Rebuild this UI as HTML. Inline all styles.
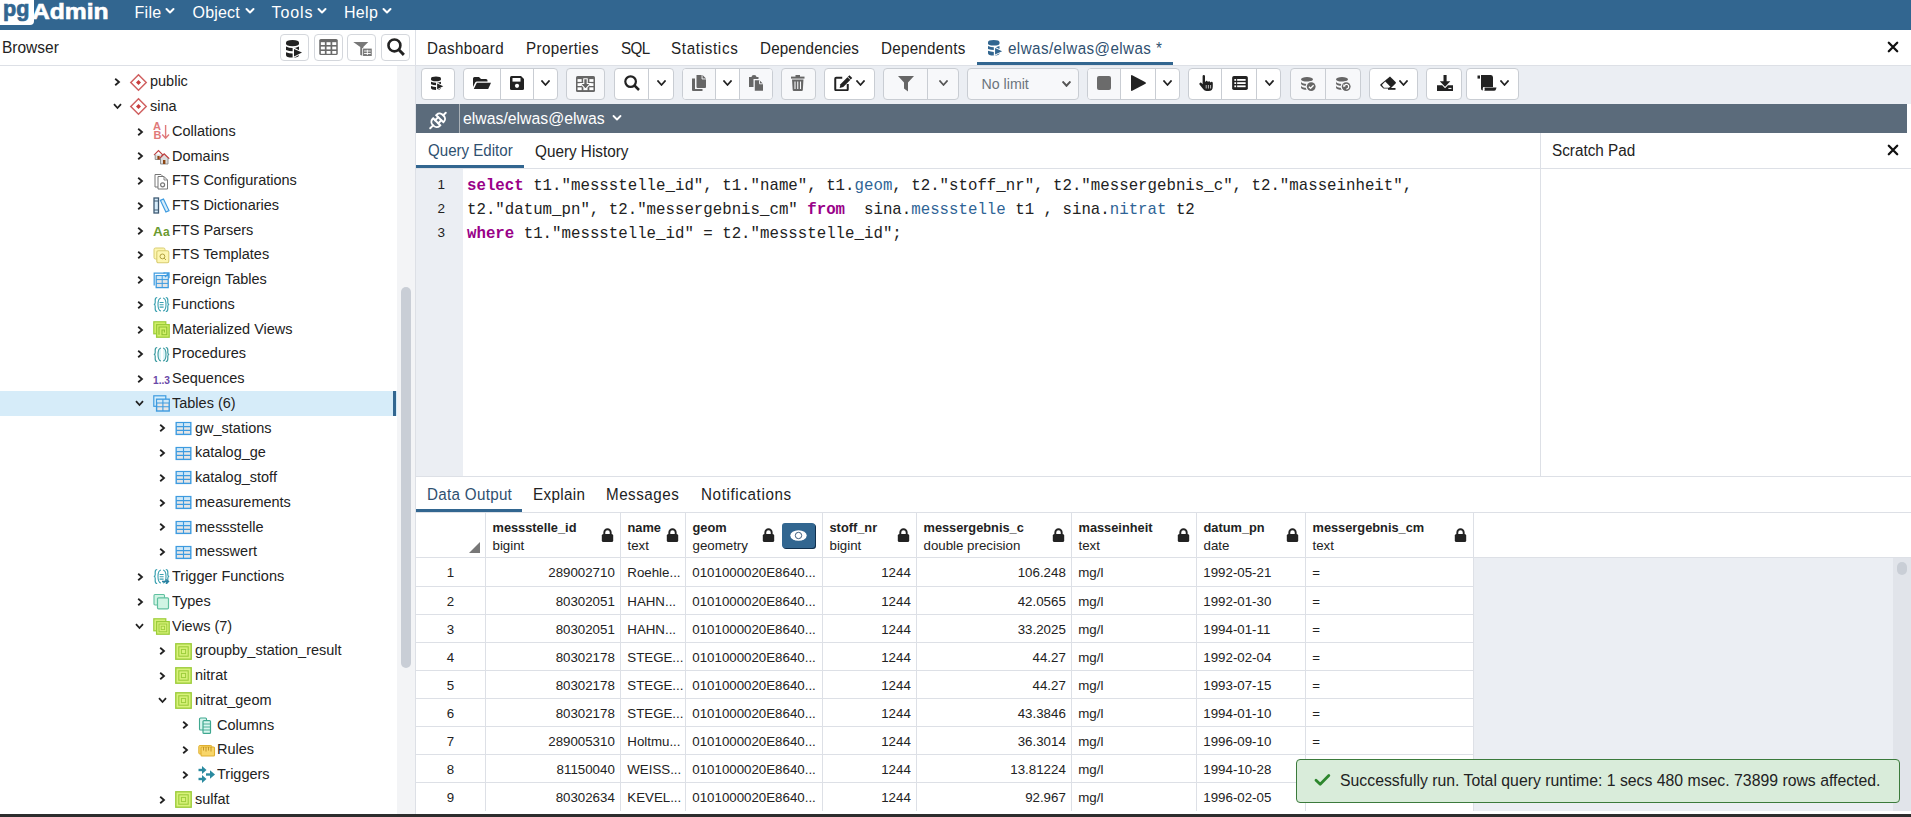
<!DOCTYPE html><html><head><meta charset="utf-8"><style>
*{box-sizing:border-box;margin:0;padding:0}
html,body{width:1911px;height:817px;overflow:hidden;background:#fff}
body{position:relative;font-family:"Liberation Sans",sans-serif;color:#222;font-size:14px}
.a{position:absolute}
.t{position:absolute;white-space:nowrap;line-height:1}
svg{display:block}
#nav{left:0;top:0;width:1911px;height:30px;background:#326690}
.menu{color:#fff;font-size:16px}
.btn{position:absolute;top:68px;height:32px;border:1px solid #c9cdd3;border-radius:4px;background:#fff}
.dis{background:#f7f8fa}
.div{position:absolute;top:0;bottom:0;width:1px;background:#c9cdd3}
.row{position:absolute;left:0;width:397px;height:24.76px}
.tx{position:absolute;top:4px;line-height:16px;white-space:nowrap;color:#222}
.chev{position:absolute;top:7px}
.ic{position:absolute;top:4px}
.gl{position:absolute;background:#dde0e6}
.cell{position:absolute;font-size:13.3px;line-height:16px;white-space:nowrap;color:#222}
</style></head><body>
<div id="nav" class="a"></div>
<div class="a" style="left:0;top:0;width:34px;height:25px;background:#fff;border-radius:0 0 4px 0"></div>
<div class="t" style="left:2.8px;top:-2.5px;font-size:22px;font-weight:bold;color:#326690;-webkit-text-stroke:0.7px #326690;transform:scaleX(0.98);transform-origin:0 0">pg</div>
<div class="t" style="left:31.5px;top:0.5px;font-size:22px;font-weight:bold;color:#fff;-webkit-text-stroke:0.6px #fff;transform:scaleX(1.12);transform-origin:0 0">Admin</div>
<div class="t menu" style="left:134.5px;top:5px;letter-spacing:0.3px">File</div>
<svg class="a" style="left:165px;top:6px" width="10" height="10" viewBox="0 0 10 10"><path d="M1.5 3 L5 6.5 L8.5 3" fill="none" stroke="#fff" stroke-width="2" stroke-linecap="round" stroke-linejoin="round"/></svg>
<div class="t menu" style="left:192.5px;top:5px;letter-spacing:0.2px">Object</div>
<svg class="a" style="left:245px;top:6px" width="10" height="10" viewBox="0 0 10 10"><path d="M1.5 3 L5 6.5 L8.5 3" fill="none" stroke="#fff" stroke-width="2" stroke-linecap="round" stroke-linejoin="round"/></svg>
<div class="t menu" style="left:271.5px;top:5px;letter-spacing:0.9px">Tools</div>
<svg class="a" style="left:317px;top:6px" width="10" height="10" viewBox="0 0 10 10"><path d="M1.5 3 L5 6.5 L8.5 3" fill="none" stroke="#fff" stroke-width="2" stroke-linecap="round" stroke-linejoin="round"/></svg>
<div class="t menu" style="left:344px;top:5px;letter-spacing:0.3px">Help</div>
<svg class="a" style="left:382px;top:6px" width="10" height="10" viewBox="0 0 10 10"><path d="M1.5 3 L5 6.5 L8.5 3" fill="none" stroke="#fff" stroke-width="2" stroke-linecap="round" stroke-linejoin="round"/></svg>
<div class="t" style="left:2px;top:39px;font-size:16.43px;transform:scaleX(0.9434);transform-origin:0 0;color:#222">Browser</div>
<div class="a" style="left:0;top:65px;width:415px;height:1px;background:#dde0e6"></div>
<div class="a" style="left:415px;top:30px;width:1px;height:35px;background:#dde0e6"></div>
<div class="a" style="left:280px;top:34px;width:29px;height:27px;border:1px solid #d4d7dc;border-radius:4px;background:#fff"></div>
<div class="a" style="left:314px;top:34px;width:29px;height:27px;border:1px solid #d4d7dc;border-radius:4px;background:#fff"></div>
<div class="a" style="left:347px;top:34px;width:29px;height:27px;border:1px solid #d4d7dc;border-radius:4px;background:#fff"></div>
<div class="a" style="left:381px;top:34px;width:29px;height:27px;border:1px solid #d4d7dc;border-radius:4px;background:#fff"></div>
<svg class="a" style="left:286px;top:40px" width="17" height="18" viewBox="0 0 17 18"><g fill="#222">
<path d="M0 2.6 Q0 0 6.5 0 Q13 0 13 2.6 V3.8 Q13 6.2 6.5 6.2 Q0 6.2 0 3.8Z"/>
<path d="M0 6.6 Q6.5 9.6 13 6.6 V10 Q6.5 12.6 0 10Z"/>
<path d="M0 12.2 Q6.5 14.8 13 12.2 V15 Q13 17.6 6.5 17.6 Q0 17.6 0 15Z"/>
</g>
<path d="M6.6 6.8 L17.6 12.6 L6.6 18.4Z" fill="#fff"/>
<path d="M8 9 L16 12.6 L8 16.4Z" fill="#222"/></svg>
<svg class="a" style="left:319px;top:39px" width="19" height="16" viewBox="0 0 18.5 16"><rect x="0" y="0" width="18.5" height="16" rx="1.6" fill="#6a6a6a"/><rect x="1.6" y="3.2" width="4" height="2.8" fill="#fff"/><rect x="7.3" y="3.2" width="4" height="2.8" fill="#fff"/><rect x="13" y="3.2" width="4" height="2.8" fill="#fff"/><rect x="1.6" y="7.6" width="4" height="2.8" fill="#fff"/><rect x="7.3" y="7.6" width="4" height="2.8" fill="#fff"/><rect x="13" y="7.6" width="4" height="2.8" fill="#fff"/><rect x="1.6" y="12" width="4" height="2.8" fill="#fff"/><rect x="7.3" y="12" width="4" height="2.8" fill="#fff"/><rect x="13" y="12" width="4" height="2.8" fill="#fff"/></svg>
<svg class="a" style="left:353px;top:42px" width="19" height="14" viewBox="0 0 18.5 14"><path d="M0 0 H15 L10 5 V14 L7 13 V5Z" fill="#777"/><rect x="9" y="6" width="9.5" height="8" fill="#fff"/><rect x="9.8" y="6.6" width="8.7" height="7.4" fill="#777"/><path d="M10.8 9 H17.5 M10.8 11.5 H17.5 M14.1 7.8 V13" stroke="#fff" stroke-width="0.9"/></svg>
<svg class="a" style="left:387px;top:38px" width="18" height="18" viewBox="0 0 16 16"><circle cx="6.6" cy="6.6" r="5.3" fill="none" stroke="#222" stroke-width="2.3"/><path d="M10.5 10.5 L15 15" stroke="#222" stroke-width="2.5999999999999996" stroke-linecap="butt"/></svg>
<div class="a" style="left:397px;top:66px;width:18px;height:748px;background:#f3f4f6"></div>
<div class="a" style="left:401px;top:287px;width:10px;height:381px;background:#c9ced6;border-radius:5px"></div>
<svg class="a" style="left:114.0px;top:78.10px" width="7" height="8" viewBox="0 0 7 8"><path d="M1.2 0.7 L5 4 L1.2 7.3" fill="none" stroke="#222" stroke-width="1.8"/></svg>
<svg class="a" style="left:130.0px;top:73.6px;overflow:visible" width="17" height="17" viewBox="0 0 17 17"><path d="M8.5 0.8 L16.2 8.5 L8.5 16.2 L0.8 8.5 Z" fill="#fff" stroke="#d06060" stroke-width="1.5"/><path d="M8.5 6 L11 8.5 L8.5 11 L6 8.5Z" fill="#c83c3c"/></svg>
<div class="tx" style="left:149.8px;top:73.30px;font-size:15.37px;transform:scaleX(0.9434);transform-origin:0 0">public</div>
<svg class="a" style="left:112.5px;top:103.34px" width="9" height="7" viewBox="0 0 9 7"><path d="M1 1.2 L4.5 5 L8 1.2" fill="none" stroke="#222" stroke-width="1.8"/></svg>
<svg class="a" style="left:130.0px;top:98.34px;overflow:visible" width="17" height="17" viewBox="0 0 17 17"><path d="M8.5 0.8 L16.2 8.5 L8.5 16.2 L0.8 8.5 Z" fill="#fff" stroke="#d06060" stroke-width="1.5"/><path d="M8.5 6 L11 8.5 L8.5 11 L6 8.5Z" fill="#c83c3c"/></svg>
<div class="tx" style="left:149.8px;top:98.04px;font-size:15.37px;transform:scaleX(0.9434);transform-origin:0 0">sina</div>
<svg class="a" style="left:136.5px;top:127.58px" width="7" height="8" viewBox="0 0 7 8"><path d="M1.2 0.7 L5 4 L1.2 7.3" fill="none" stroke="#222" stroke-width="1.8"/></svg>
<svg class="a" style="left:152.5px;top:123.08px;overflow:visible" width="17" height="17" viewBox="0 0 17 17"><text x="0" y="7" font-size="11" fill="#e07a7a" font-family="Liberation Sans" font-weight="bold">A</text><text x="0.5" y="16" font-size="11" fill="#e07a7a" font-family="Liberation Sans" font-weight="bold">B</text><path d="M12.6 2 V15.2 M9.2 11.6 L12.6 15.2 L16 11.6" fill="none" stroke="#e07a7a" stroke-width="1.4"/></svg>
<div class="tx" style="left:172.3px;top:122.78px;font-size:15.37px;transform:scaleX(0.9434);transform-origin:0 0">Collations</div>
<svg class="a" style="left:136.5px;top:152.32px" width="7" height="8" viewBox="0 0 7 8"><path d="M1.2 0.7 L5 4 L1.2 7.3" fill="none" stroke="#222" stroke-width="1.8"/></svg>
<svg class="a" style="left:152.5px;top:147.82px;overflow:visible" width="17" height="17" viewBox="0 0 17 17"><path d="M1 7.2 L5.5 2.5 L10 7.2" fill="none" stroke="#c04040" stroke-width="1.2"/><path d="M2.2 6.5 V11.5 H8.8 V6.5" fill="#ddd" stroke="#888" stroke-width="0.9"/><rect x="4.4" y="8" width="2.2" height="3.5" fill="#8b4513"/><path d="M6.2 10.8 L11.2 5.8 L16.2 10.8" fill="#ddd" stroke="#c04040" stroke-width="1.3"/><path d="M7.5 10 V16 H15 V10" fill="#ddd" stroke="#888" stroke-width="0.9"/><rect x="10" y="12" width="2.4" height="4" fill="#8b4513"/></svg>
<div class="tx" style="left:172.3px;top:147.52px;font-size:15.37px;transform:scaleX(0.9434);transform-origin:0 0">Domains</div>
<svg class="a" style="left:136.5px;top:177.06px" width="7" height="8" viewBox="0 0 7 8"><path d="M1.2 0.7 L5 4 L1.2 7.3" fill="none" stroke="#222" stroke-width="1.8"/></svg>
<svg class="a" style="left:152.5px;top:172.56px;overflow:visible" width="17" height="17" viewBox="0 0 17 17"><path d="M2 1.5 H8 L11 4.5 V14 H2Z" fill="#fff" stroke="#777" stroke-width="1"/><path d="M5 3.5 H11 L14.5 7 V16 H5Z" fill="#fff" stroke="#777" stroke-width="1"/><path d="M11 3.5 V7 H14.5" fill="none" stroke="#777" stroke-width="0.9"/><circle cx="9.6" cy="11.8" r="2" fill="none" stroke="#777" stroke-width="1.2"/></svg>
<div class="tx" style="left:172.3px;top:172.26px;font-size:15.37px;transform:scaleX(0.9434);transform-origin:0 0">FTS Configurations</div>
<svg class="a" style="left:136.5px;top:201.80px" width="7" height="8" viewBox="0 0 7 8"><path d="M1.2 0.7 L5 4 L1.2 7.3" fill="none" stroke="#222" stroke-width="1.8"/></svg>
<svg class="a" style="left:152.5px;top:197.3px;overflow:visible" width="17" height="17" viewBox="0 0 17 17"><rect x="1" y="1" width="4.5" height="15" fill="#d6ecfa" stroke="#3e5a73" stroke-width="1.3"/><path d="M1 4 H5.5 M1 13 H5.5" stroke="#3e5a73"/><path d="M7.4 3.4 L10.5 2 L16 13.6 L12.9 15Z" fill="#d6ecfa" stroke="#3d9be0" stroke-width="1.2"/></svg>
<div class="tx" style="left:172.3px;top:197.00px;font-size:15.37px;transform:scaleX(0.9434);transform-origin:0 0">FTS Dictionaries</div>
<svg class="a" style="left:136.5px;top:226.54px" width="7" height="8" viewBox="0 0 7 8"><path d="M1.2 0.7 L5 4 L1.2 7.3" fill="none" stroke="#222" stroke-width="1.8"/></svg>
<svg class="a" style="left:152.5px;top:222.04px;overflow:visible" width="17" height="17" viewBox="0 0 17 17"><text x="0" y="14" font-size="13.5" font-weight="bold" fill="#6a9a30" font-family="Liberation Sans">A</text><text x="10" y="14" font-size="12" font-weight="bold" fill="#6a9a30" font-family="Liberation Sans">a</text></svg>
<div class="tx" style="left:172.3px;top:221.74px;font-size:15.37px;transform:scaleX(0.9434);transform-origin:0 0">FTS Parsers</div>
<svg class="a" style="left:136.5px;top:251.28px" width="7" height="8" viewBox="0 0 7 8"><path d="M1.2 0.7 L5 4 L1.2 7.3" fill="none" stroke="#222" stroke-width="1.8"/></svg>
<svg class="a" style="left:152.5px;top:246.78px;overflow:visible" width="17" height="17" viewBox="0 0 17 17"><rect x="1" y="1" width="11" height="11" rx="1.5" fill="#fdf6b0" stroke="#d8cc70" stroke-width="1"/><rect x="3.8" y="3.8" width="12" height="12" rx="1.5" fill="#fdf6b0" stroke="#d8cc70" stroke-width="1.1"/><circle cx="9.4" cy="9.4" r="2.4" fill="none" stroke="#b0a040" stroke-width="1"/><path d="M11.1 11.1 L13 13" stroke="#b0a040" stroke-width="1"/></svg>
<div class="tx" style="left:172.3px;top:246.48px;font-size:15.37px;transform:scaleX(0.9434);transform-origin:0 0">FTS Templates</div>
<svg class="a" style="left:136.5px;top:276.02px" width="7" height="8" viewBox="0 0 7 8"><path d="M1.2 0.7 L5 4 L1.2 7.3" fill="none" stroke="#222" stroke-width="1.8"/></svg>
<svg class="a" style="left:152.5px;top:271.52px;overflow:visible" width="17" height="17" viewBox="0 0 17 17"><path d="M11.5 1.2 H1.2 V13.5" fill="none" stroke="#3d9be0" stroke-width="1.2"/><rect x="3.2" y="3.6" width="12" height="12" fill="#e6e6e6" stroke="#3d9be0" stroke-width="1.3"/><rect x="3.9" y="4.3" width="10.6" height="3" fill="#cfe8f8"/><path d="M3.2 7.6 H15.2 M3.2 11.4 H15.2 M9.2 3.6 V15.6" stroke="#3d9be0" stroke-width="1"/><path d="M10.5 1 H16 V6.2 M16 1 L12 5" fill="none" stroke="#3d9be0" stroke-width="1.3"/></svg>
<div class="tx" style="left:172.3px;top:271.22px;font-size:15.37px;transform:scaleX(0.9434);transform-origin:0 0">Foreign Tables</div>
<svg class="a" style="left:136.5px;top:300.76px" width="7" height="8" viewBox="0 0 7 8"><path d="M1.2 0.7 L5 4 L1.2 7.3" fill="none" stroke="#222" stroke-width="1.8"/></svg>
<svg class="a" style="left:152.5px;top:296.26px;overflow:visible" width="17" height="17" viewBox="0 0 17 17"><path d="M4.2 1.5 Q2.2 1.5 2.2 4 V6.8 Q2.2 8.5 0.8 8.5 Q2.2 8.5 2.2 10.2 V13 Q2.2 15.5 4.2 15.5" fill="none" stroke="#3aa0b0" stroke-width="1.2"/><path d="M8 2 Q5 2.5 5 8.5 Q5 14.5 8 15 M10 2 Q13 2.5 13 8.5 Q13 14.5 10 15" fill="none" stroke="#3aa0b0" stroke-width="1.1"/><path d="M12.8 1.5 Q14.8 1.5 14.8 4 V6.8 Q14.8 8.5 16.2 8.5 Q14.8 8.5 14.8 10.2 V13 Q14.8 15.5 12.8 15.5" fill="none" stroke="#3aa0b0" stroke-width="1.2"/><path d="M6.6 6.5 H10.6 M6.6 8.8 H10.6 M6.6 11.1 H10.6" stroke="#3aa0b0" stroke-width="1.1"/></svg>
<div class="tx" style="left:172.3px;top:295.96px;font-size:15.37px;transform:scaleX(0.9434);transform-origin:0 0">Functions</div>
<svg class="a" style="left:136.5px;top:325.50px" width="7" height="8" viewBox="0 0 7 8"><path d="M1.2 0.7 L5 4 L1.2 7.3" fill="none" stroke="#222" stroke-width="1.8"/></svg>
<svg class="a" style="left:152.5px;top:321.0px;overflow:visible" width="17" height="17" viewBox="0 0 17 17"><rect x="0.8" y="0.8" width="12" height="12" fill="#d2f06a" stroke="#9ccc3a" stroke-width="1.2"/><rect x="3.6" y="3.6" width="12.6" height="12.6" fill="#d2f06a" stroke="#9ccc3a" stroke-width="1.3"/><path d="M6 13.8 V6 H13.8 V13.8 H9 V9 H11.4 V11.4" fill="none" stroke="#8cbf30" stroke-width="1.1"/></svg>
<div class="tx" style="left:172.3px;top:320.70px;font-size:15.37px;transform:scaleX(0.9434);transform-origin:0 0">Materialized Views</div>
<svg class="a" style="left:136.5px;top:350.24px" width="7" height="8" viewBox="0 0 7 8"><path d="M1.2 0.7 L5 4 L1.2 7.3" fill="none" stroke="#222" stroke-width="1.8"/></svg>
<svg class="a" style="left:152.5px;top:345.74px;overflow:visible" width="17" height="17" viewBox="0 0 17 17"><path d="M4.2 1.5 Q2.2 1.5 2.2 4 V6.8 Q2.2 8.5 0.8 8.5 Q2.2 8.5 2.2 10.2 V13 Q2.2 15.5 4.2 15.5" fill="none" stroke="#3a9aa0" stroke-width="1.2"/><path d="M8 2 Q5 2.5 5 8.5 Q5 14.5 8 15 M10 2 Q13 2.5 13 8.5 Q13 14.5 10 15" fill="#e0f6f8" stroke="#3a9aa0" stroke-width="1.1"/><path d="M12.8 1.5 Q14.8 1.5 14.8 4 V6.8 Q14.8 8.5 16.2 8.5 Q14.8 8.5 14.8 10.2 V13 Q14.8 15.5 12.8 15.5" fill="none" stroke="#3a9aa0" stroke-width="1.2"/></svg>
<div class="tx" style="left:172.3px;top:345.44px;font-size:15.37px;transform:scaleX(0.9434);transform-origin:0 0">Procedures</div>
<svg class="a" style="left:136.5px;top:374.98px" width="7" height="8" viewBox="0 0 7 8"><path d="M1.2 0.7 L5 4 L1.2 7.3" fill="none" stroke="#222" stroke-width="1.8"/></svg>
<svg class="a" style="left:152.5px;top:370.48px;overflow:visible" width="17" height="17" viewBox="0 0 17 17"><text x="0" y="13.5" font-size="11.5" font-weight="bold" fill="#6a48a8" font-family="Liberation Sans" textLength="17" lengthAdjust="spacingAndGlyphs">1..3</text></svg>
<div class="tx" style="left:172.3px;top:370.18px;font-size:15.37px;transform:scaleX(0.9434);transform-origin:0 0">Sequences</div>
<div class="a" style="left:0;top:391.32px;width:397px;height:24.7px;background:#d6ecf9"></div>
<div class="a" style="left:393px;top:391.32px;width:3px;height:24.7px;background:#326690"></div>
<svg class="a" style="left:135.0px;top:400.22px" width="9" height="7" viewBox="0 0 9 7"><path d="M1 1.2 L4.5 5 L8 1.2" fill="none" stroke="#222" stroke-width="1.8"/></svg>
<svg class="a" style="left:152.5px;top:395.22px;overflow:visible" width="17" height="17" viewBox="0 0 17 17"><rect x="0.8" y="0.8" width="12" height="10.5" fill="#d6effc" stroke="#3d9be0" stroke-width="1.2"/><rect x="3.6" y="4.2" width="12.6" height="11.8" fill="#e6e6e6" stroke="#3d9be0" stroke-width="1.4"/><rect x="4.3" y="4.9" width="11.2" height="2.8" fill="#cfe8f8"/><path d="M3.6 8 H16.2 M3.6 11.8 H16.2 M9.9 4.2 V16" stroke="#3d9be0" stroke-width="1.1"/></svg>
<div class="tx" style="left:172.3px;top:394.92px;font-size:15.37px;transform:scaleX(0.9434);transform-origin:0 0">Tables (6)</div>
<svg class="a" style="left:159.0px;top:424.46px" width="7" height="8" viewBox="0 0 7 8"><path d="M1.2 0.7 L5 4 L1.2 7.3" fill="none" stroke="#222" stroke-width="1.8"/></svg>
<svg class="a" style="left:175.0px;top:419.96px;overflow:visible" width="17" height="17" viewBox="0 0 17 17"><rect x="1.2" y="2.6" width="14.6" height="11.8" fill="#e6e6e6" stroke="#3d9be0" stroke-width="1.4"/><rect x="1.9" y="3.3" width="13.2" height="3" fill="#cfe8f8"/><path d="M1.2 6.6 H15.8 M1.2 10.4 H15.8 M8.5 2.6 V14.4" stroke="#3d9be0" stroke-width="1.1"/></svg>
<div class="tx" style="left:194.8px;top:419.66px;font-size:15.37px;transform:scaleX(0.9434);transform-origin:0 0">gw_stations</div>
<svg class="a" style="left:159.0px;top:449.20px" width="7" height="8" viewBox="0 0 7 8"><path d="M1.2 0.7 L5 4 L1.2 7.3" fill="none" stroke="#222" stroke-width="1.8"/></svg>
<svg class="a" style="left:175.0px;top:444.7px;overflow:visible" width="17" height="17" viewBox="0 0 17 17"><rect x="1.2" y="2.6" width="14.6" height="11.8" fill="#e6e6e6" stroke="#3d9be0" stroke-width="1.4"/><rect x="1.9" y="3.3" width="13.2" height="3" fill="#cfe8f8"/><path d="M1.2 6.6 H15.8 M1.2 10.4 H15.8 M8.5 2.6 V14.4" stroke="#3d9be0" stroke-width="1.1"/></svg>
<div class="tx" style="left:194.8px;top:444.40px;font-size:15.37px;transform:scaleX(0.9434);transform-origin:0 0">katalog_ge</div>
<svg class="a" style="left:159.0px;top:473.94px" width="7" height="8" viewBox="0 0 7 8"><path d="M1.2 0.7 L5 4 L1.2 7.3" fill="none" stroke="#222" stroke-width="1.8"/></svg>
<svg class="a" style="left:175.0px;top:469.44px;overflow:visible" width="17" height="17" viewBox="0 0 17 17"><rect x="1.2" y="2.6" width="14.6" height="11.8" fill="#e6e6e6" stroke="#3d9be0" stroke-width="1.4"/><rect x="1.9" y="3.3" width="13.2" height="3" fill="#cfe8f8"/><path d="M1.2 6.6 H15.8 M1.2 10.4 H15.8 M8.5 2.6 V14.4" stroke="#3d9be0" stroke-width="1.1"/></svg>
<div class="tx" style="left:194.8px;top:469.14px;font-size:15.37px;transform:scaleX(0.9434);transform-origin:0 0">katalog_stoff</div>
<svg class="a" style="left:159.0px;top:498.68px" width="7" height="8" viewBox="0 0 7 8"><path d="M1.2 0.7 L5 4 L1.2 7.3" fill="none" stroke="#222" stroke-width="1.8"/></svg>
<svg class="a" style="left:175.0px;top:494.18px;overflow:visible" width="17" height="17" viewBox="0 0 17 17"><rect x="1.2" y="2.6" width="14.6" height="11.8" fill="#e6e6e6" stroke="#3d9be0" stroke-width="1.4"/><rect x="1.9" y="3.3" width="13.2" height="3" fill="#cfe8f8"/><path d="M1.2 6.6 H15.8 M1.2 10.4 H15.8 M8.5 2.6 V14.4" stroke="#3d9be0" stroke-width="1.1"/></svg>
<div class="tx" style="left:194.8px;top:493.88px;font-size:15.37px;transform:scaleX(0.9434);transform-origin:0 0">measurements</div>
<svg class="a" style="left:159.0px;top:523.42px" width="7" height="8" viewBox="0 0 7 8"><path d="M1.2 0.7 L5 4 L1.2 7.3" fill="none" stroke="#222" stroke-width="1.8"/></svg>
<svg class="a" style="left:175.0px;top:518.92px;overflow:visible" width="17" height="17" viewBox="0 0 17 17"><rect x="1.2" y="2.6" width="14.6" height="11.8" fill="#e6e6e6" stroke="#3d9be0" stroke-width="1.4"/><rect x="1.9" y="3.3" width="13.2" height="3" fill="#cfe8f8"/><path d="M1.2 6.6 H15.8 M1.2 10.4 H15.8 M8.5 2.6 V14.4" stroke="#3d9be0" stroke-width="1.1"/></svg>
<div class="tx" style="left:194.8px;top:518.62px;font-size:15.37px;transform:scaleX(0.9434);transform-origin:0 0">messstelle</div>
<svg class="a" style="left:159.0px;top:548.16px" width="7" height="8" viewBox="0 0 7 8"><path d="M1.2 0.7 L5 4 L1.2 7.3" fill="none" stroke="#222" stroke-width="1.8"/></svg>
<svg class="a" style="left:175.0px;top:543.66px;overflow:visible" width="17" height="17" viewBox="0 0 17 17"><rect x="1.2" y="2.6" width="14.6" height="11.8" fill="#e6e6e6" stroke="#3d9be0" stroke-width="1.4"/><rect x="1.9" y="3.3" width="13.2" height="3" fill="#cfe8f8"/><path d="M1.2 6.6 H15.8 M1.2 10.4 H15.8 M8.5 2.6 V14.4" stroke="#3d9be0" stroke-width="1.1"/></svg>
<div class="tx" style="left:194.8px;top:543.36px;font-size:15.37px;transform:scaleX(0.9434);transform-origin:0 0">messwert</div>
<svg class="a" style="left:136.5px;top:572.90px" width="7" height="8" viewBox="0 0 7 8"><path d="M1.2 0.7 L5 4 L1.2 7.3" fill="none" stroke="#222" stroke-width="1.8"/></svg>
<svg class="a" style="left:152.5px;top:568.4px;overflow:visible" width="17" height="17" viewBox="0 0 17 17"><path d="M4.2 1.5 Q2.2 1.5 2.2 4 V6.8 Q2.2 8.5 0.8 8.5 Q2.2 8.5 2.2 10.2 V13 Q2.2 15.5 4.2 15.5" fill="none" stroke="#3aa0b0" stroke-width="1.2"/><path d="M8 2 Q5 2.5 5 8.5 Q5 14.5 8 15 M10 2 Q13 2.5 13 8.5 Q13 14.5 10 15" fill="none" stroke="#3aa0b0" stroke-width="1.1"/><path d="M12.8 1.5 Q14.8 1.5 14.8 4 V6.8 Q14.8 8.5 16.2 8.5 Q14.8 8.5 14.8 10.2 V13 Q14.8 15.5 12.8 15.5" fill="none" stroke="#3aa0b0" stroke-width="1.2"/><path d="M6.6 6.5 H10.6 M6.6 8.8 H10.6 M6.6 11.1 H10.6" stroke="#3aa0b0" stroke-width="1.1"/><path d="M9 13.5 H15 M13 11.5 L15.5 13.5 L13 15.5" fill="none" stroke="#2a7fa0" stroke-width="1.4"/></svg>
<div class="tx" style="left:172.3px;top:568.10px;font-size:15.37px;transform:scaleX(0.9434);transform-origin:0 0">Trigger Functions</div>
<svg class="a" style="left:136.5px;top:597.64px" width="7" height="8" viewBox="0 0 7 8"><path d="M1.2 0.7 L5 4 L1.2 7.3" fill="none" stroke="#222" stroke-width="1.8"/></svg>
<svg class="a" style="left:152.5px;top:593.14px;overflow:visible" width="17" height="17" viewBox="0 0 17 17"><rect x="1" y="1.5" width="10.5" height="10.5" rx="1" fill="#d0f4e4" stroke="#60c0a0" stroke-width="1.1"/><rect x="4.5" y="4.8" width="11" height="11" rx="1" fill="#d0f4e4" stroke="#60c0a0" stroke-width="1.2"/></svg>
<div class="tx" style="left:172.3px;top:592.84px;font-size:15.37px;transform:scaleX(0.9434);transform-origin:0 0">Types</div>
<svg class="a" style="left:135.0px;top:622.88px" width="9" height="7" viewBox="0 0 9 7"><path d="M1 1.2 L4.5 5 L8 1.2" fill="none" stroke="#222" stroke-width="1.8"/></svg>
<svg class="a" style="left:152.5px;top:617.88px;overflow:visible" width="17" height="17" viewBox="0 0 17 17"><rect x="0.8" y="0.8" width="12" height="12" fill="#d8f27a" stroke="#9ccc3a" stroke-width="1.2"/><rect x="3.6" y="3.6" width="12.6" height="12.6" fill="#d8f27a" stroke="#9ccc3a" stroke-width="1.3"/><rect x="6" y="6" width="7.8" height="7.8" fill="none" stroke="#9ccc3a" stroke-width="1"/><rect x="8.2" y="8.2" width="3.4" height="3.4" fill="none" stroke="#9ccc3a" stroke-width="0.9"/></svg>
<div class="tx" style="left:172.3px;top:617.58px;font-size:15.37px;transform:scaleX(0.9434);transform-origin:0 0">Views (7)</div>
<svg class="a" style="left:159.0px;top:647.12px" width="7" height="8" viewBox="0 0 7 8"><path d="M1.2 0.7 L5 4 L1.2 7.3" fill="none" stroke="#222" stroke-width="1.8"/></svg>
<svg class="a" style="left:175.0px;top:642.62px;overflow:visible" width="17" height="17" viewBox="0 0 17 17"><rect x="0.8" y="0.8" width="15.4" height="15.4" fill="#d8f27a" stroke="#9ccc3a" stroke-width="1.4"/><rect x="3.8" y="3.8" width="9.4" height="9.4" fill="none" stroke="#9ccc3a" stroke-width="1.1"/><rect x="6.4" y="6.4" width="4.2" height="4.2" fill="none" stroke="#9ccc3a" stroke-width="1"/></svg>
<div class="tx" style="left:194.8px;top:642.32px;font-size:15.37px;transform:scaleX(0.9434);transform-origin:0 0">groupby_station_result</div>
<svg class="a" style="left:159.0px;top:671.86px" width="7" height="8" viewBox="0 0 7 8"><path d="M1.2 0.7 L5 4 L1.2 7.3" fill="none" stroke="#222" stroke-width="1.8"/></svg>
<svg class="a" style="left:175.0px;top:667.36px;overflow:visible" width="17" height="17" viewBox="0 0 17 17"><rect x="0.8" y="0.8" width="15.4" height="15.4" fill="#d8f27a" stroke="#9ccc3a" stroke-width="1.4"/><rect x="3.8" y="3.8" width="9.4" height="9.4" fill="none" stroke="#9ccc3a" stroke-width="1.1"/><rect x="6.4" y="6.4" width="4.2" height="4.2" fill="none" stroke="#9ccc3a" stroke-width="1"/></svg>
<div class="tx" style="left:194.8px;top:667.06px;font-size:15.37px;transform:scaleX(0.9434);transform-origin:0 0">nitrat</div>
<svg class="a" style="left:157.5px;top:697.10px" width="9" height="7" viewBox="0 0 9 7"><path d="M1 1.2 L4.5 5 L8 1.2" fill="none" stroke="#222" stroke-width="1.8"/></svg>
<svg class="a" style="left:175.0px;top:692.1px;overflow:visible" width="17" height="17" viewBox="0 0 17 17"><rect x="0.8" y="0.8" width="15.4" height="15.4" fill="#d8f27a" stroke="#9ccc3a" stroke-width="1.4"/><rect x="3.8" y="3.8" width="9.4" height="9.4" fill="none" stroke="#9ccc3a" stroke-width="1.1"/><rect x="6.4" y="6.4" width="4.2" height="4.2" fill="none" stroke="#9ccc3a" stroke-width="1"/></svg>
<div class="tx" style="left:194.8px;top:691.80px;font-size:15.37px;transform:scaleX(0.9434);transform-origin:0 0">nitrat_geom</div>
<svg class="a" style="left:181.5px;top:721.34px" width="7" height="8" viewBox="0 0 7 8"><path d="M1.2 0.7 L5 4 L1.2 7.3" fill="none" stroke="#222" stroke-width="1.8"/></svg>
<svg class="a" style="left:197.5px;top:716.84px;overflow:visible" width="17" height="17" viewBox="0 0 17 17"><rect x="1.5" y="1" width="7" height="12" rx="1" fill="#d8f6ee" stroke="#40a890" stroke-width="1.1"/><rect x="5" y="3.6" width="7.5" height="12.8" rx="1" fill="#d8f6ee" stroke="#40a890" stroke-width="1.2"/><path d="M5 7 H12.5 M5 10 H12.5 M5 13 H12.5" stroke="#40a890" stroke-width="0.9"/></svg>
<div class="tx" style="left:217.3px;top:716.54px;font-size:15.37px;transform:scaleX(0.9434);transform-origin:0 0">Columns</div>
<svg class="a" style="left:181.5px;top:746.08px" width="7" height="8" viewBox="0 0 7 8"><path d="M1.2 0.7 L5 4 L1.2 7.3" fill="none" stroke="#222" stroke-width="1.8"/></svg>
<svg class="a" style="left:197.5px;top:741.58px;overflow:visible" width="17" height="17" viewBox="0 0 17 17"><rect x="0.8" y="3.5" width="13" height="8.5" rx="1" fill="#f8d66a" stroke="#e0b030" stroke-width="1"/><rect x="3" y="5" width="13.5" height="9" rx="1" fill="#f8d66a" stroke="#e0b030" stroke-width="1.1"/><path d="M5.5 5 V8.5 M8 5 V9.5 M10.5 5 V8.5 M13 5 V9.5" stroke="#c09020" stroke-width="0.9"/></svg>
<div class="tx" style="left:217.3px;top:741.28px;font-size:15.37px;transform:scaleX(0.9434);transform-origin:0 0">Rules</div>
<svg class="a" style="left:181.5px;top:770.82px" width="7" height="8" viewBox="0 0 7 8"><path d="M1.2 0.7 L5 4 L1.2 7.3" fill="none" stroke="#222" stroke-width="1.8"/></svg>
<svg class="a" style="left:197.5px;top:766.32px;overflow:visible" width="17" height="17" viewBox="0 0 17 17"><g stroke="#2a8aa0" stroke-width="2.4"><path d="M0.5 4 H5"/><path d="M0.5 13 H5"/><path d="M8 8.5 H12.5"/></g><g fill="#2a8aa0"><path d="M4 0 L8.5 4 L4 8Z"/><path d="M4 9 L8.5 13 L4 17Z"/><path d="M12 4.3 L17 8.5 L12 12.7Z"/></g></svg>
<div class="tx" style="left:217.3px;top:766.02px;font-size:15.37px;transform:scaleX(0.9434);transform-origin:0 0">Triggers</div>
<svg class="a" style="left:159.0px;top:795.56px" width="7" height="8" viewBox="0 0 7 8"><path d="M1.2 0.7 L5 4 L1.2 7.3" fill="none" stroke="#222" stroke-width="1.8"/></svg>
<svg class="a" style="left:175.0px;top:791.06px;overflow:visible" width="17" height="17" viewBox="0 0 17 17"><rect x="0.8" y="0.8" width="15.4" height="15.4" fill="#d8f27a" stroke="#9ccc3a" stroke-width="1.4"/><rect x="3.8" y="3.8" width="9.4" height="9.4" fill="none" stroke="#9ccc3a" stroke-width="1.1"/><rect x="6.4" y="6.4" width="4.2" height="4.2" fill="none" stroke="#9ccc3a" stroke-width="1"/></svg>
<div class="tx" style="left:194.8px;top:790.76px;font-size:15.37px;transform:scaleX(0.9434);transform-origin:0 0">sulfat</div>
<div class="t" style="left:427.4px;top:40px;font-size:16.11px;transform:scaleX(0.9434);transform-origin:0 0;color:#222;letter-spacing:0.307px">Dashboard</div>
<div class="t" style="left:525.7px;top:40px;font-size:16.11px;transform:scaleX(0.9434);transform-origin:0 0;color:#222;letter-spacing:0.382px">Properties</div>
<div class="t" style="left:620.6px;top:40px;font-size:16.11px;transform:scaleX(0.9434);transform-origin:0 0;color:#222;letter-spacing:-0.636px">SQL</div>
<div class="t" style="left:671.3px;top:40px;font-size:16.11px;transform:scaleX(0.9434);transform-origin:0 0;color:#222;letter-spacing:0.700px">Statistics</div>
<div class="t" style="left:759.6px;top:40px;font-size:16.11px;transform:scaleX(0.9434);transform-origin:0 0;color:#222;letter-spacing:0.170px">Dependencies</div>
<div class="t" style="left:881px;top:40px;font-size:16.11px;transform:scaleX(0.9434);transform-origin:0 0;color:#222;letter-spacing:0.276px">Dependents</div>
<svg class="a" style="left:988px;top:40px" width="15" height="16" viewBox="0 0 17 18"><g fill="#326690">
<path d="M0 2.6 Q0 0 6.5 0 Q13 0 13 2.6 V3.8 Q13 6.2 6.5 6.2 Q0 6.2 0 3.8Z"/>
<path d="M0 6.6 Q6.5 9.6 13 6.6 V10 Q6.5 12.6 0 10Z"/>
<path d="M0 12.2 Q6.5 14.8 13 12.2 V15 Q13 17.6 6.5 17.6 Q0 17.6 0 15Z"/>
</g>
<path d="M6.6 6.8 L17.6 12.6 L6.6 18.4Z" fill="#fff"/>
<path d="M8 9 L16 12.6 L8 16.4Z" fill="#326690"/></svg>
<div class="t" style="left:1007.5px;top:40px;font-size:16.11px;transform:scaleX(0.9434);transform-origin:0 0;color:#2f5070;letter-spacing:0.445px">elwas/elwas@elwas *</div>
<div class="a" style="left:977px;top:62px;width:196px;height:3px;background:#326690"></div>
<svg class="a" style="left:1886.5px;top:40.5px" width="12" height="12" viewBox="0 0 12 12"><path d="M1.8 1.8 L10.2 10.2 M10.2 1.8 L1.8 10.2" stroke="#111" stroke-width="2.3" stroke-linecap="round"/></svg>
<div class="a" style="left:415px;top:65px;width:1496px;height:39px;background:#ebeef3;border-top:1px solid #dde0e6"></div>
<div class="btn" style="left:421px;width:34px;overflow:hidden"></div>
<div class="btn" style="left:463px;width:95px;overflow:hidden"><div class="div" style="left:36px"></div><div class="div" style="left:69px"></div></div>
<div class="btn dis" style="left:566px;width:39px;overflow:hidden"></div>
<div class="btn" style="left:614px;width:60px;overflow:hidden"><div class="div" style="left:33px"></div></div>
<div class="btn" style="left:682px;width:91px;overflow:hidden"><div class="a" style="left:0px;top:0;width:32px;height:100%;background:#f7f8fa"></div><div class="a" style="left:56px;top:0;width:34px;height:100%;background:#f7f8fa"></div><div class="div" style="left:32px"></div><div class="div" style="left:56px"></div></div>
<div class="btn dis" style="left:781px;width:35px;overflow:hidden"></div>
<div class="btn" style="left:824px;width:51px;overflow:hidden"></div>
<div class="btn dis" style="left:883px;width:76px;overflow:hidden"><div class="div" style="left:43px"></div></div>
<div class="btn dis" style="left:967px;width:112px;overflow:hidden"></div>
<div class="btn" style="left:1087px;width:93px;overflow:hidden"><div class="a" style="left:0px;top:0;width:32px;height:100%;background:#f7f8fa"></div><div class="div" style="left:32px"></div><div class="div" style="left:67px"></div></div>
<div class="btn" style="left:1188px;width:93px;overflow:hidden"><div class="div" style="left:32px"></div><div class="div" style="left:67px"></div></div>
<div class="btn dis" style="left:1290px;width:71px;overflow:hidden"><div class="div" style="left:34px"></div></div>
<div class="btn" style="left:1369px;width:49px;overflow:hidden"></div>
<div class="btn" style="left:1426px;width:36px;overflow:hidden"></div>
<div class="btn" style="left:1466px;width:53px;overflow:hidden"></div>
<svg class="a" style="left:431px;top:76px" width="13" height="15" viewBox="0 0 17 18"><g fill="#222">
<path d="M0 2.6 Q0 0 6.5 0 Q13 0 13 2.6 V3.8 Q13 6.2 6.5 6.2 Q0 6.2 0 3.8Z"/>
<path d="M0 6.6 Q6.5 9.6 13 6.6 V10 Q6.5 12.6 0 10Z"/>
<path d="M0 12.2 Q6.5 14.8 13 12.2 V15 Q13 17.6 6.5 17.6 Q0 17.6 0 15Z"/>
</g>
<path d="M6.6 6.8 L17.6 12.6 L6.6 18.4Z" fill="#fff"/>
<path d="M8 9 L16 12.6 L8 16.4Z" fill="#222"/></svg>
<svg class="a" style="left:473px;top:77px" width="18" height="12" viewBox="0 0 18 12"><path d="M0 1.5 Q0 0 1.5 0 H6 L8 2 H13 Q14.5 2 14.5 3.5 V4.5 H4 Q2.8 4.5 2.2 5.6 L0 10 Z" fill="#222"/><path d="M3.8 5.8 H18 L15.2 12 H0.8 Z" fill="#222"/></svg>
<svg class="a" style="left:510px;top:76px" width="14" height="14" viewBox="0 0 14 14"><path d="M2 0 H11 L14 3 V12.5 Q14 14 12.5 14 H1.5 Q0 14 0 12.5 V1.5 Q0 0 1.5 0Z" fill="#222"/><rect x="2.5" y="2" width="8" height="3.6" fill="#fff"/><circle cx="7" cy="9.8" r="2.1" fill="#fff"/></svg>
<svg class="a" style="left:541px;top:80px" width="9" height="6" viewBox="0 0 9 6"><path d="M1.05 1.05 L4.5 4.95 L7.95 1.05" fill="none" stroke="#222" stroke-width="1.7" stroke-linecap="square" stroke-linejoin="miter"/></svg>
<svg class="a" style="left:576px;top:76px" width="19" height="16" viewBox="0 0 18.5 15.5"><rect x="0" y="0" width="18.5" height="15.5" rx="1.5" fill="#666"/><rect x="1.5" y="3" width="4" height="2.7" fill="#fff" /><rect x="7.2" y="3" width="4" height="2.7" fill="#fff" /><rect x="13" y="3" width="4" height="2.7" fill="#fff" /><rect x="1.5" y="7" width="4" height="2.7" fill="#fff" /><rect x="7.2" y="7" width="4" height="2.7" fill="#fff" /><rect x="13" y="7" width="4" height="2.7" fill="#fff" /><rect x="1.5" y="11" width="4" height="2.7" fill="#fff" /><rect x="7.2" y="11" width="4" height="2.7" fill="#fff" /><rect x="13" y="11" width="4" height="2.7" fill="#fff" /><path d="M7.6 2.6 H10.9 V7.2 H14.2 L9.25 12.6 L4.3 7.2 H7.6Z" fill="#666" stroke="#fff" stroke-width="1"/></svg>
<svg class="a" style="left:624px;top:75px" width="16" height="16" viewBox="0 0 16 16"><circle cx="6.6" cy="6.6" r="5.3" fill="none" stroke="#222" stroke-width="2.2"/><path d="M10.5 10.5 L15 15" stroke="#222" stroke-width="2.5" stroke-linecap="butt"/></svg>
<svg class="a" style="left:657px;top:80px" width="9" height="6" viewBox="0 0 9 6"><path d="M1.05 1.05 L4.5 4.95 L7.95 1.05" fill="none" stroke="#222" stroke-width="1.7" stroke-linecap="square" stroke-linejoin="miter"/></svg>
<svg class="a" style="left:692px;top:75px" width="14" height="16" viewBox="0 0 14 16"><path d="M4.5 0 H10 L14 4 V12 Q14 13 13 13 H5.5 Q4.5 13 4.5 12Z" fill="#666"/><path d="M10 0 V4 H14" fill="#f7f8fa" stroke="#f7f8fa" stroke-width="0.8"/><path d="M10.5 0 L14 3.5 H10.5Z" fill="#666"/><path d="M0 3.5 H3 V14 H10.5 V16 H1 Q0 16 0 15Z" fill="#666"/></svg>
<svg class="a" style="left:723px;top:80px" width="9" height="6" viewBox="0 0 9 6"><path d="M1.05 1.05 L4.5 4.95 L7.95 1.05" fill="none" stroke="#222" stroke-width="1.7" stroke-linecap="square" stroke-linejoin="miter"/></svg>
<svg class="a" style="left:749px;top:75px" width="14" height="16" viewBox="0 0 14 16"><path d="M0 2 H2.5 Q2.5 0 5 0 Q7.5 0 7.5 2 H9.5 V4 H4.5 V12 H0Z" fill="#666"/><path d="M5.8 5.3 H10.5 L14 8.8 V15.7 H5.8Z" fill="#666"/><path d="M10.5 5.3 V8.8 H14" fill="none" stroke="#f7f8fa" stroke-width="0.9"/></svg>
<svg class="a" style="left:791px;top:75px" width="14" height="16" viewBox="0 0 14 16"><rect x="0" y="1.6" width="13.5" height="2" fill="#666"/><rect x="4.5" y="0" width="4.5" height="2" fill="#666"/><path d="M1 4.5 H12.5 L11.8 15 Q11.7 16 10.7 16 H2.8 Q1.8 16 1.7 15Z" fill="#666"/><path d="M4 6.5 V14 M6.75 6.5 V14 M9.5 6.5 V14" stroke="#f7f8fa" stroke-width="1.1"/></svg>
<svg class="a" style="left:834px;top:75px" width="19" height="16" viewBox="0 0 18.5 16"><path d="M8 2.8 H2 Q1 2.8 1 3.8 V14.2 Q1 15.2 2 15.2 H12.5 Q13.5 15.2 13.5 14.2 V9" fill="none" stroke="#222" stroke-width="2"/><path d="M15.2 0.3 L18 3.1 L9 12.1 L5.4 12.9 L6.2 9.3Z" fill="#222"/><path d="M13.5 2 L16.3 4.8" stroke="#fff" stroke-width="0.9"/></svg>
<svg class="a" style="left:856px;top:80px" width="9" height="6" viewBox="0 0 9 6"><path d="M1.05 1.05 L4.5 4.95 L7.95 1.05" fill="none" stroke="#222" stroke-width="1.7" stroke-linecap="square" stroke-linejoin="miter"/></svg>
<svg class="a" style="left:898px;top:76px" width="16" height="16" viewBox="0 0 16 16"><path d="M0 0 H16 L10 6.5 V15.5 L6 12.5 V6.5Z" fill="#666"/></svg>
<svg class="a" style="left:939px;top:80px" width="9" height="6" viewBox="0 0 9 6"><path d="M1.05 1.05 L4.5 4.95 L7.95 1.05" fill="none" stroke="#555" stroke-width="1.7" stroke-linecap="square" stroke-linejoin="miter"/></svg>
<svg class="a" style="left:1097px;top:76px" width="14" height="14" viewBox="0 0 14 14"><rect x="0" y="0" width="14" height="14" rx="2" fill="#6b6b6b"/></svg>
<svg class="a" style="left:1131px;top:75px" width="15" height="16" viewBox="0 0 15 16"><path d="M1.2 0.2 Q0 -0.3 0 1 V15 Q0 16.3 1.2 15.8 L14.5 8.8 Q15.2 8 14.5 7.2Z" fill="#222"/></svg>
<svg class="a" style="left:1163px;top:80px" width="9" height="6" viewBox="0 0 9 6"><path d="M1.05 1.05 L4.5 4.95 L7.95 1.05" fill="none" stroke="#222" stroke-width="1.7" stroke-linecap="square" stroke-linejoin="miter"/></svg>
<svg class="a" style="left:1199px;top:75px" width="14" height="16" viewBox="0 0 14 16"><path d="M3.6 1.2 Q3.6 0 4.8 0 Q6 0 6 1.2 V7 L6.5 6.8 Q6.6 5.8 7.6 5.8 Q8.6 5.8 8.7 6.8 L9 7 Q9.2 6.2 10.1 6.2 Q11 6.2 11.2 7.2 L11.5 7.4 Q11.8 6.8 12.5 6.8 Q13.8 6.8 13.8 8.2 V11.5 Q13.8 16 9.5 16 H7.5 Q5.5 16 4.3 14.2 L0.5 9.5 Q0 8.5 0.8 7.9 Q1.8 7.2 2.7 8.2 L3.6 9.3Z" fill="#222"/><path d="M7.2 10 V13.5 M9.4 10 V13.5 M11.6 10 V13.5" stroke="#fff" stroke-width="0.7"/></svg>
<svg class="a" style="left:1232px;top:76px" width="16" height="14" viewBox="0 0 15.7 14"><rect x="0" y="0" width="15.7" height="14" rx="1.8" fill="#222"/><rect x="2.2" y="3" width="1.8" height="1.8" fill="#fff"/><rect x="5" y="3" width="8.5" height="1.8" fill="#fff"/><rect x="2.2" y="6.2" width="1.8" height="1.8" fill="#fff"/><rect x="5" y="6.2" width="8.5" height="1.8" fill="#fff"/><rect x="2.2" y="9.4" width="1.8" height="1.8" fill="#fff"/><rect x="5" y="9.4" width="8.5" height="1.8" fill="#fff"/></svg>
<svg class="a" style="left:1265px;top:80px" width="9" height="6" viewBox="0 0 9 6"><path d="M1.05 1.05 L4.5 4.95 L7.95 1.05" fill="none" stroke="#222" stroke-width="1.7" stroke-linecap="square" stroke-linejoin="miter"/></svg>
<svg class="a" style="left:1301px;top:77px" width="15" height="15" viewBox="0 0 15 15"><g fill="#666"><ellipse cx="6" cy="2.3" rx="6" ry="2.3"/>
<path d="M0 4.6 A6 2.3 0 0 0 12 4.6 V6.6 A6 2.3 0 0 1 0 6.6Z"/>
<path d="M0 8.5 A6 2.3 0 0 0 12 8.5 V10.5 A6 2.3 0 0 1 0 10.5Z"/></g>
<circle cx="10.2" cy="9.6" r="5.6" fill="#f7f8fa"/><circle cx="10.2" cy="9.6" r="4.4" fill="#666"/><path d="M7.9 9.7 L9.6 11.3 L12.6 8.2" fill="none" stroke="#fff" stroke-width="1.3"/></svg>
<svg class="a" style="left:1336px;top:77px" width="15" height="15" viewBox="0 0 15 15"><g fill="#666"><ellipse cx="6" cy="2.3" rx="6" ry="2.3"/>
<path d="M0 4.6 A6 2.3 0 0 0 12 4.6 V6.6 A6 2.3 0 0 1 0 6.6Z"/>
<path d="M0 8.5 A6 2.3 0 0 0 12 8.5 V10.5 A6 2.3 0 0 1 0 10.5Z"/></g>
<circle cx="10.2" cy="9.6" r="5.6" fill="#f7f8fa"/><circle cx="10.2" cy="9.6" r="4.4" fill="#666"/><path d="M8.4 8.6 A2.3 2.3 0 1 1 10.2 12" fill="none" stroke="#fff" stroke-width="1.2"/><path d="M7.2 7.2 L9.8 8.9 L7.4 10.2Z" fill="#fff"/></svg>
<svg class="a" style="left:1380px;top:76px" width="16" height="14" viewBox="0 0 16 14"><path d="M10 0.5 L15.6 6.1 Q16.2 6.8 15.6 7.5 L10.5 12.6 L3.5 12.6 L0.6 9.7 Q0 9 0.6 8.3 Z" fill="#222"/><path d="M5.2 5.5 L10.4 10.7 L8.9 11.8 H3.9 L1.9 9 Z" fill="#fff"/><rect x="8" y="12" width="7.5" height="1.8" fill="#222"/></svg>
<svg class="a" style="left:1399px;top:80px" width="9" height="6" viewBox="0 0 9 6"><path d="M1.05 1.05 L4.5 4.95 L7.95 1.05" fill="none" stroke="#222" stroke-width="1.7" stroke-linecap="square" stroke-linejoin="miter"/></svg>
<svg class="a" style="left:1437px;top:75px" width="16" height="16" viewBox="0 0 15.5 15.5"><rect x="6.3" y="0" width="3" height="8" fill="#222"/><path d="M2.7 6 H12.9 L7.8 11.3Z" fill="#222"/><path d="M0 10 H5 L7.8 12.8 L10.6 10 H15.5 V15.5 H0Z" fill="#222"/><rect x="11" y="12.5" width="3" height="1" fill="#fff"/></svg>
<svg class="a" style="left:1477px;top:75px" width="20" height="16" viewBox="0 0 20 16"><path d="M0.5 0.5 H3 V3.6 H0.5Z" fill="#222"/><path d="M4 0 H14 Q16 0 16 2.5 V12 H7 Q5.8 12 5.8 13.3 V15.5 Q4 15.5 4 13.5Z" fill="#222"/><path d="M7.5 12.5 H19.5 L19 14.3 Q18.5 15.8 17 15.8 H7.2 Q8 15 7.5 12.5Z" fill="#222"/></svg>
<svg class="a" style="left:1500px;top:80px" width="9" height="6" viewBox="0 0 9 6"><path d="M1.05 1.05 L4.5 4.95 L7.95 1.05" fill="none" stroke="#222" stroke-width="1.7" stroke-linecap="square" stroke-linejoin="miter"/></svg>
<div class="t" style="left:981.5px;top:77px;font-size:14.2px;color:#6c757d">No limit</div>
<svg class="a" style="left:1062px;top:81px" width="9" height="6" viewBox="0 0 9 6"><path d="M1.2 1.2 L4.5 4.8 L7.8 1.2" fill="none" stroke="#555" stroke-width="2" stroke-linecap="square" stroke-linejoin="miter"/></svg>
<div class="a" style="left:415px;top:104px;width:1492px;height:29px;background:#5b6b7b"></div>
<div class="a" style="left:459px;top:104px;width:1px;height:29px;background:#e0e0e0;opacity:.6"></div>
<svg class="a" style="left:426.5px;top:109.5px" width="22" height="21" viewBox="0 0 19 18"><g transform="rotate(45 9.5 9)" fill="none" stroke="#fff" stroke-width="1.7" stroke-linecap="round">
<path d="M9.5 -0.5 V2.6"/>
<path d="M5.2 6.8 V5.8 A4.3 3.2 0 0 1 13.8 5.8 V6.8 Z"/>
<path d="M7.6 6.8 V10.6 M11.4 6.8 V10.6"/>
<path d="M5.2 10.6 H13.8 V11.4 A4.3 3.6 0 0 1 5.2 11.4 Z"/>
<path d="M9.5 15 V18.5"/>
</g></svg>
<div class="t" style="left:463px;top:111px;font-size:16.75px;transform:scaleX(0.9434);transform-origin:0 0;color:#fff">elwas/elwas@elwas</div>
<svg class="a" style="left:612px;top:113px" width="10" height="10" viewBox="0 0 10 10"><path d="M1.5 3 L5 6.5 L8.5 3" fill="none" stroke="#fff" stroke-width="1.8" stroke-linecap="round" stroke-linejoin="round"/></svg>
<div class="t" style="left:428px;top:143px;font-size:16.01px;transform:scaleX(0.9434);transform-origin:0 0;color:#2f5070">Query Editor</div>
<div class="t" style="left:535px;top:143px;font-size:16.22px;transform:scaleX(0.9434);transform-origin:0 0;color:#222">Query History</div>
<div class="a" style="left:415px;top:165px;width:109px;height:3px;background:#326690"></div>
<div class="a" style="left:415px;top:168px;width:1496px;height:1px;background:#dde0e6"></div>
<div class="t" style="left:1552px;top:142px;font-size:16.22px;transform:scaleX(0.9434);transform-origin:0 0;color:#222">Scratch Pad</div>
<svg class="a" style="left:1886.5px;top:143.5px" width="12" height="12" viewBox="0 0 12 12"><path d="M1.8 1.8 L10.2 10.2 M10.2 1.8 L1.8 10.2" stroke="#111" stroke-width="2.3" stroke-linecap="round"/></svg>
<div class="a" style="left:1540px;top:133px;width:1px;height:343px;background:#dde0e6"></div>
<div class="a" style="left:415px;top:169px;width:48px;height:307px;background:#ebeef3"></div>
<div class="t" style="left:437.5px;top:177.5px;font-size:13.5px;color:#222">1</div>
<div class="t" style="left:437.5px;top:201.5px;font-size:13.5px;color:#222">2</div>
<div class="t" style="left:437.5px;top:225.5px;font-size:13.5px;color:#222">3</div>
<div class="t" style="left:467px;top:178.5px;font-size:15.75px;font-family:'Liberation Mono',monospace;color:#222"><span style="color:#990088;font-weight:bold">select</span>&nbsp;t1.&quot;messstelle_id&quot;,&nbsp;t1.&quot;name&quot;,&nbsp;t1.<span style="color:#2f6496">geom</span>,&nbsp;t2.&quot;stoff_nr&quot;,&nbsp;t2.&quot;messergebnis_c&quot;,&nbsp;t2.&quot;masseinheit&quot;,</div>
<div class="t" style="left:467px;top:202.5px;font-size:15.75px;font-family:'Liberation Mono',monospace;color:#222">t2.&quot;datum_pn&quot;,&nbsp;t2.&quot;messergebnis_cm&quot;&nbsp;<span style="color:#990088;font-weight:bold">from</span>&nbsp;&nbsp;sina.<span style="color:#2f6496">messstelle</span>&nbsp;t1&nbsp;,&nbsp;sina.<span style="color:#2f6496">nitrat</span>&nbsp;t2</div>
<div class="t" style="left:467px;top:226.5px;font-size:15.75px;font-family:'Liberation Mono',monospace;color:#222"><span style="color:#990088;font-weight:bold">where</span>&nbsp;t1.&quot;messstelle_id&quot;&nbsp;=&nbsp;t2.&quot;messstelle_id&quot;;</div>
<div class="a" style="left:415px;top:476px;width:1496px;height:1px;background:#dde0e6"></div>
<div class="t" style="left:426.5px;top:486px;font-size:16.11px;transform:scaleX(0.9434);transform-origin:0 0;color:#2f5070;letter-spacing:0.307px">Data Output</div>
<div class="t" style="left:533px;top:486px;font-size:16.11px;transform:scaleX(0.9434);transform-origin:0 0;color:#222;letter-spacing:0.371px">Explain</div>
<div class="t" style="left:605.9px;top:486px;font-size:16.11px;transform:scaleX(0.9434);transform-origin:0 0;color:#222;letter-spacing:0.530px">Messages</div>
<div class="t" style="left:700.9px;top:486px;font-size:16.11px;transform:scaleX(0.9434);transform-origin:0 0;color:#222;letter-spacing:0.647px">Notifications</div>
<div class="a" style="left:415px;top:509px;width:107px;height:3px;background:#326690"></div>
<div class="a" style="left:1474px;top:558px;width:437px;height:253px;background:#ebeef3"></div>
<div class="a" style="left:1893px;top:558px;width:18px;height:253px;background:#e1e4ea"></div>
<div class="a" style="left:1897px;top:562px;width:10px;height:13px;background:#c9ced6;border-radius:5px"></div>
<div class="gl" style="left:415px;top:512px;width:1496px;height:1px"></div>
<div class="gl" style="left:415px;top:557px;width:1496px;height:1px"></div>
<div class="gl" style="left:415px;top:585.53px;width:1059px;height:1px"></div>
<div class="gl" style="left:415px;top:613.66px;width:1059px;height:1px"></div>
<div class="gl" style="left:415px;top:641.79px;width:1059px;height:1px"></div>
<div class="gl" style="left:415px;top:669.92px;width:1059px;height:1px"></div>
<div class="gl" style="left:415px;top:698.05px;width:1059px;height:1px"></div>
<div class="gl" style="left:415px;top:726.18px;width:1059px;height:1px"></div>
<div class="gl" style="left:415px;top:754.31px;width:1059px;height:1px"></div>
<div class="gl" style="left:415px;top:782.44px;width:1059px;height:1px"></div>
<div class="gl" style="left:485px;top:512px;width:1px;height:299px"></div>
<div class="gl" style="left:620px;top:512px;width:1px;height:299px"></div>
<div class="gl" style="left:685px;top:512px;width:1px;height:299px"></div>
<div class="gl" style="left:822px;top:512px;width:1px;height:299px"></div>
<div class="gl" style="left:916px;top:512px;width:1px;height:299px"></div>
<div class="gl" style="left:1071px;top:512px;width:1px;height:299px"></div>
<div class="gl" style="left:1196px;top:512px;width:1px;height:299px"></div>
<div class="gl" style="left:1305px;top:512px;width:1px;height:299px"></div>
<div class="gl" style="left:1473px;top:512px;width:1px;height:299px"></div>
<div class="cell" style="left:492.5px;top:520px;font-weight:bold;font-size:12.8px">messstelle_id</div>
<div class="cell" style="left:492.5px;top:537.5px;font-size:13.3px">bigint</div>
<svg class="a" style="left:601px;top:528px" width="13" height="14" viewBox="0 0 13 14"><path d="M3.3 6.2 V4.4 A3.2 3.2 0 0 1 9.7 4.4 V6.2" fill="none" stroke="#222" stroke-width="1.9"/><rect x="0.8" y="6" width="11.4" height="8" rx="1.6" fill="#222"/></svg>
<div class="cell" style="left:627.5px;top:520px;font-weight:bold;font-size:12.8px">name</div>
<div class="cell" style="left:627.5px;top:537.5px;font-size:13.3px">text</div>
<svg class="a" style="left:666px;top:528px" width="13" height="14" viewBox="0 0 13 14"><path d="M3.3 6.2 V4.4 A3.2 3.2 0 0 1 9.7 4.4 V6.2" fill="none" stroke="#222" stroke-width="1.9"/><rect x="0.8" y="6" width="11.4" height="8" rx="1.6" fill="#222"/></svg>
<div class="cell" style="left:692.5px;top:520px;font-weight:bold;font-size:12.8px">geom</div>
<div class="cell" style="left:692.5px;top:537.5px;font-size:13.3px">geometry</div>
<svg class="a" style="left:762px;top:528px" width="13" height="14" viewBox="0 0 13 14"><path d="M3.3 6.2 V4.4 A3.2 3.2 0 0 1 9.7 4.4 V6.2" fill="none" stroke="#222" stroke-width="1.9"/><rect x="0.8" y="6" width="11.4" height="8" rx="1.6" fill="#222"/></svg>
<div class="cell" style="left:829.5px;top:520px;font-weight:bold;font-size:12.8px">stoff_nr</div>
<div class="cell" style="left:829.5px;top:537.5px;font-size:13.3px">bigint</div>
<svg class="a" style="left:897px;top:528px" width="13" height="14" viewBox="0 0 13 14"><path d="M3.3 6.2 V4.4 A3.2 3.2 0 0 1 9.7 4.4 V6.2" fill="none" stroke="#222" stroke-width="1.9"/><rect x="0.8" y="6" width="11.4" height="8" rx="1.6" fill="#222"/></svg>
<div class="cell" style="left:923.5px;top:520px;font-weight:bold;font-size:12.8px">messergebnis_c</div>
<div class="cell" style="left:923.5px;top:537.5px;font-size:13.3px">double precision</div>
<svg class="a" style="left:1052px;top:528px" width="13" height="14" viewBox="0 0 13 14"><path d="M3.3 6.2 V4.4 A3.2 3.2 0 0 1 9.7 4.4 V6.2" fill="none" stroke="#222" stroke-width="1.9"/><rect x="0.8" y="6" width="11.4" height="8" rx="1.6" fill="#222"/></svg>
<div class="cell" style="left:1078.5px;top:520px;font-weight:bold;font-size:12.8px">masseinheit</div>
<div class="cell" style="left:1078.5px;top:537.5px;font-size:13.3px">text</div>
<svg class="a" style="left:1177px;top:528px" width="13" height="14" viewBox="0 0 13 14"><path d="M3.3 6.2 V4.4 A3.2 3.2 0 0 1 9.7 4.4 V6.2" fill="none" stroke="#222" stroke-width="1.9"/><rect x="0.8" y="6" width="11.4" height="8" rx="1.6" fill="#222"/></svg>
<div class="cell" style="left:1203.5px;top:520px;font-weight:bold;font-size:12.8px">datum_pn</div>
<div class="cell" style="left:1203.5px;top:537.5px;font-size:13.3px">date</div>
<svg class="a" style="left:1286px;top:528px" width="13" height="14" viewBox="0 0 13 14"><path d="M3.3 6.2 V4.4 A3.2 3.2 0 0 1 9.7 4.4 V6.2" fill="none" stroke="#222" stroke-width="1.9"/><rect x="0.8" y="6" width="11.4" height="8" rx="1.6" fill="#222"/></svg>
<div class="cell" style="left:1312.5px;top:520px;font-weight:bold;font-size:12.8px">messergebnis_cm</div>
<div class="cell" style="left:1312.5px;top:537.5px;font-size:13.3px">text</div>
<svg class="a" style="left:1454px;top:528px" width="13" height="14" viewBox="0 0 13 14"><path d="M3.3 6.2 V4.4 A3.2 3.2 0 0 1 9.7 4.4 V6.2" fill="none" stroke="#222" stroke-width="1.9"/><rect x="0.8" y="6" width="11.4" height="8" rx="1.6" fill="#222"/></svg>
<div class="a" style="left:781.5px;top:523px;width:33.5px;height:25px;background:#326690;border-radius:3px;box-shadow:1px 1px 0 #0f2f4d"></div>
<svg class="a" style="left:790px;top:530px" width="17" height="11" viewBox="0 0 17 11"><ellipse cx="8.5" cy="5.5" rx="8.2" ry="5.3" fill="#fff"/><circle cx="8.5" cy="5.5" r="3.2" fill="#fff" stroke="#2c4f70" stroke-width="0.9"/></svg>
<svg class="a" style="left:469px;top:542px" width="11" height="11" viewBox="0 0 11 11"><path d="M11 0 V11 H0Z" fill="#777"/></svg>
<div class="cell" style="left:415px;width:71px;text-align:center;top:565.40px">1</div>
<div class="cell" style="left:486px;width:128.8px;text-align:right;top:565.40px">289002710</div>
<div class="cell" style="left:627.3px;top:565.40px">Roehle...</div>
<div class="cell" style="left:692.3px;top:565.40px">0101000020E8640...</div>
<div class="cell" style="left:823px;width:87.8px;text-align:right;top:565.40px">1244</div>
<div class="cell" style="left:917px;width:148.8px;text-align:right;top:565.40px">106.248</div>
<div class="cell" style="left:1078.3px;top:565.40px">mg/l</div>
<div class="cell" style="left:1203.3px;top:565.40px">1992-05-21</div>
<div class="cell" style="left:1312.3px;top:565.40px">=</div>
<div class="cell" style="left:415px;width:71px;text-align:center;top:593.53px">2</div>
<div class="cell" style="left:486px;width:128.8px;text-align:right;top:593.53px">80302051</div>
<div class="cell" style="left:627.3px;top:593.53px">HAHN...</div>
<div class="cell" style="left:692.3px;top:593.53px">0101000020E8640...</div>
<div class="cell" style="left:823px;width:87.8px;text-align:right;top:593.53px">1244</div>
<div class="cell" style="left:917px;width:148.8px;text-align:right;top:593.53px">42.0565</div>
<div class="cell" style="left:1078.3px;top:593.53px">mg/l</div>
<div class="cell" style="left:1203.3px;top:593.53px">1992-01-30</div>
<div class="cell" style="left:1312.3px;top:593.53px">=</div>
<div class="cell" style="left:415px;width:71px;text-align:center;top:621.66px">3</div>
<div class="cell" style="left:486px;width:128.8px;text-align:right;top:621.66px">80302051</div>
<div class="cell" style="left:627.3px;top:621.66px">HAHN...</div>
<div class="cell" style="left:692.3px;top:621.66px">0101000020E8640...</div>
<div class="cell" style="left:823px;width:87.8px;text-align:right;top:621.66px">1244</div>
<div class="cell" style="left:917px;width:148.8px;text-align:right;top:621.66px">33.2025</div>
<div class="cell" style="left:1078.3px;top:621.66px">mg/l</div>
<div class="cell" style="left:1203.3px;top:621.66px">1994-01-11</div>
<div class="cell" style="left:1312.3px;top:621.66px">=</div>
<div class="cell" style="left:415px;width:71px;text-align:center;top:649.79px">4</div>
<div class="cell" style="left:486px;width:128.8px;text-align:right;top:649.79px">80302178</div>
<div class="cell" style="left:627.3px;top:649.79px">STEGE...</div>
<div class="cell" style="left:692.3px;top:649.79px">0101000020E8640...</div>
<div class="cell" style="left:823px;width:87.8px;text-align:right;top:649.79px">1244</div>
<div class="cell" style="left:917px;width:148.8px;text-align:right;top:649.79px">44.27</div>
<div class="cell" style="left:1078.3px;top:649.79px">mg/l</div>
<div class="cell" style="left:1203.3px;top:649.79px">1992-02-04</div>
<div class="cell" style="left:1312.3px;top:649.79px">=</div>
<div class="cell" style="left:415px;width:71px;text-align:center;top:677.92px">5</div>
<div class="cell" style="left:486px;width:128.8px;text-align:right;top:677.92px">80302178</div>
<div class="cell" style="left:627.3px;top:677.92px">STEGE...</div>
<div class="cell" style="left:692.3px;top:677.92px">0101000020E8640...</div>
<div class="cell" style="left:823px;width:87.8px;text-align:right;top:677.92px">1244</div>
<div class="cell" style="left:917px;width:148.8px;text-align:right;top:677.92px">44.27</div>
<div class="cell" style="left:1078.3px;top:677.92px">mg/l</div>
<div class="cell" style="left:1203.3px;top:677.92px">1993-07-15</div>
<div class="cell" style="left:1312.3px;top:677.92px">=</div>
<div class="cell" style="left:415px;width:71px;text-align:center;top:706.05px">6</div>
<div class="cell" style="left:486px;width:128.8px;text-align:right;top:706.05px">80302178</div>
<div class="cell" style="left:627.3px;top:706.05px">STEGE...</div>
<div class="cell" style="left:692.3px;top:706.05px">0101000020E8640...</div>
<div class="cell" style="left:823px;width:87.8px;text-align:right;top:706.05px">1244</div>
<div class="cell" style="left:917px;width:148.8px;text-align:right;top:706.05px">43.3846</div>
<div class="cell" style="left:1078.3px;top:706.05px">mg/l</div>
<div class="cell" style="left:1203.3px;top:706.05px">1994-01-10</div>
<div class="cell" style="left:1312.3px;top:706.05px">=</div>
<div class="cell" style="left:415px;width:71px;text-align:center;top:734.18px">7</div>
<div class="cell" style="left:486px;width:128.8px;text-align:right;top:734.18px">289005310</div>
<div class="cell" style="left:627.3px;top:734.18px">Holtmu...</div>
<div class="cell" style="left:692.3px;top:734.18px">0101000020E8640...</div>
<div class="cell" style="left:823px;width:87.8px;text-align:right;top:734.18px">1244</div>
<div class="cell" style="left:917px;width:148.8px;text-align:right;top:734.18px">36.3014</div>
<div class="cell" style="left:1078.3px;top:734.18px">mg/l</div>
<div class="cell" style="left:1203.3px;top:734.18px">1996-09-10</div>
<div class="cell" style="left:1312.3px;top:734.18px">=</div>
<div class="cell" style="left:415px;width:71px;text-align:center;top:762.31px">8</div>
<div class="cell" style="left:486px;width:128.8px;text-align:right;top:762.31px">81150040</div>
<div class="cell" style="left:627.3px;top:762.31px">WEISS...</div>
<div class="cell" style="left:692.3px;top:762.31px">0101000020E8640...</div>
<div class="cell" style="left:823px;width:87.8px;text-align:right;top:762.31px">1244</div>
<div class="cell" style="left:917px;width:148.8px;text-align:right;top:762.31px">13.81224</div>
<div class="cell" style="left:1078.3px;top:762.31px">mg/l</div>
<div class="cell" style="left:1203.3px;top:762.31px">1994-10-28</div>
<div class="cell" style="left:415px;width:71px;text-align:center;top:790.44px">9</div>
<div class="cell" style="left:486px;width:128.8px;text-align:right;top:790.44px">80302634</div>
<div class="cell" style="left:627.3px;top:790.44px">KEVEL...</div>
<div class="cell" style="left:692.3px;top:790.44px">0101000020E8640...</div>
<div class="cell" style="left:823px;width:87.8px;text-align:right;top:790.44px">1244</div>
<div class="cell" style="left:917px;width:148.8px;text-align:right;top:790.44px">92.967</div>
<div class="cell" style="left:1078.3px;top:790.44px">mg/l</div>
<div class="cell" style="left:1203.3px;top:790.44px">1996-02-05</div>
<div class="a" style="left:1296px;top:759px;width:604px;height:44px;background:#d9ecda;border:1px solid #3b7a3b;border-radius:4px"></div>
<svg class="a" style="left:1314px;top:773px" width="17" height="14" viewBox="0 0 17 14"><path d="M2 7.2 L6.2 11.2 L14.8 2.6" fill="none" stroke="#2d862d" stroke-width="2.8" stroke-linecap="round" stroke-linejoin="round"/></svg>
<div class="t" style="left:1340px;top:773px;font-size:16.75px;transform:scaleX(0.9434);transform-origin:0 0;color:#222">Successfully run. Total query runtime: 1 secs 480 msec. 73899 rows affected.</div>
<div class="a" style="left:415px;top:104px;width:1px;height:29px;background:#dde0e6"></div>
<div class="a" style="left:415px;top:30px;width:1px;height:784px;background:#dde0e6"></div>
<div class="a" style="left:0;top:814px;width:1911px;height:3px;background:#2d2d2d"></div>
</body></html>
